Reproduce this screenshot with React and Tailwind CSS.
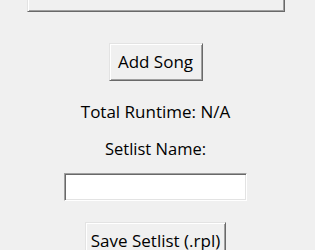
import React from 'react';

const raised =
  'bg-[#f0f0f0] border border-t-[#e3e3e3] border-l-[#e3e3e3] border-b-[#696969] border-r-[#696969] shadow-[inset_1px_1px_0_#ffffff,inset_-1px_-1px_0_#a0a0a0]';

const App = () => {
  return (
    <div className="w-[315px] h-[250px] overflow-hidden bg-[#f0f0f0] font-['Open_Sans',sans-serif] text-[17px] text-black">
      <div className="flex flex-col items-center pr-1">
        {/* folder button, mostly scrolled out of view */}
        <button
          className={`${raised} mt-[-26px] w-[258px] h-[38px] text-[#a0a0a0] [text-shadow:1px_1px_0_#ffffff] leading-[22px]`}
          disabled
        >
          Choose Folder with MP3 Files
        </button>

        <button className={`${raised} mt-[31px] w-[94px] h-[38px] leading-[22px]`}>Add Song</button>

        <div className="mt-[20px] h-[22px] leading-[22px]">Total Runtime: N/A</div>

        <div className="mt-[15px] h-[22px] leading-[22px] text-[16.5px]">Setlist Name:</div>

        <input
          type="text"
          className="mt-[13px] w-[183px] h-[28px] bg-white border border-t-[#a0a0a0] border-l-[#a0a0a0] border-b-[#ffffff] border-r-[#ffffff] shadow-[inset_1px_1px_0_#696969,inset_-1px_-1px_0_#e3e3e3] outline-none px-1"
        />

        <button className={`${raised} mt-[21px] w-[141px] h-[38px] leading-[22px]`}>Save Setlist (.rpl)</button>
      </div>
    </div>
  );
};

export default App;
